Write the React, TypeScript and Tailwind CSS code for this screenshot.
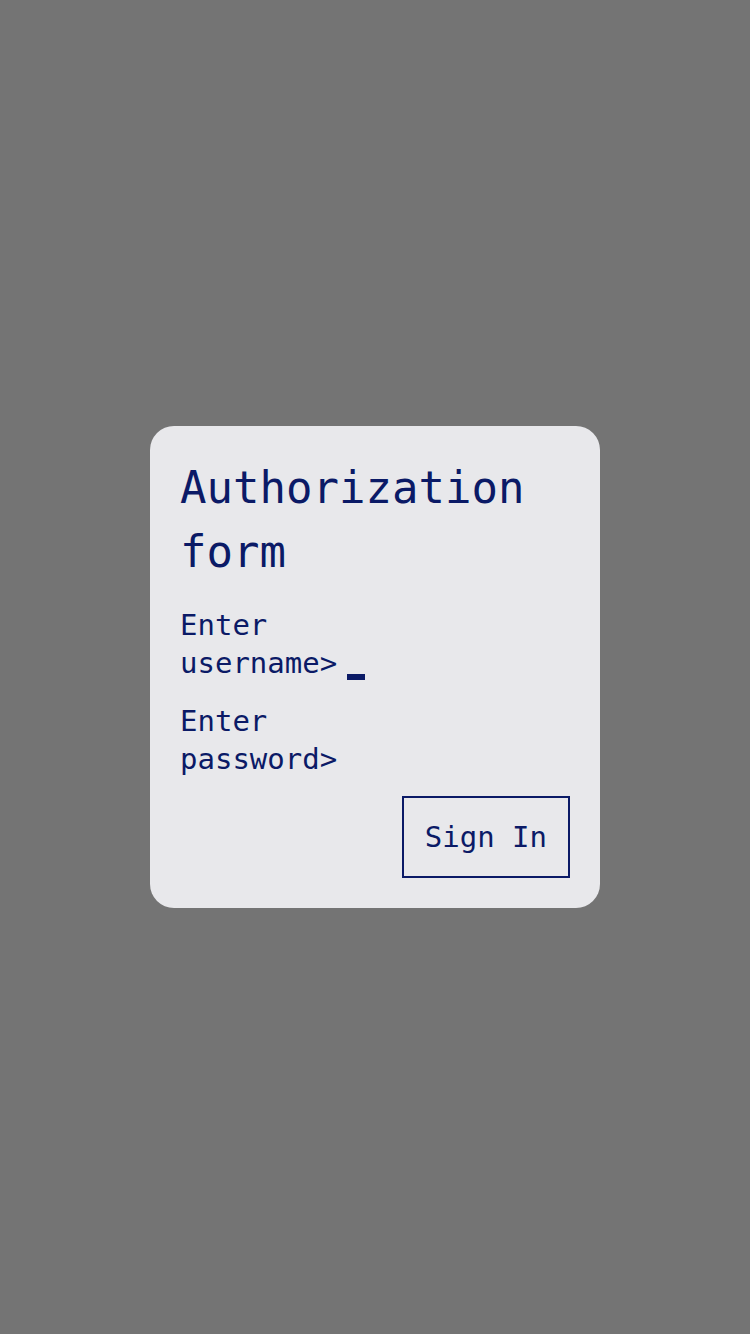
export default function App() {
  return (
    <div className="min-h-[1334px] w-full bg-[#747474] flex items-center justify-center font-['DejaVu_Sans_Mono',monospace] text-[#0b1a66]">
      <div className="w-[450px] bg-[#e8e8eb] rounded-[24px] p-[30px] flex flex-col">
        <h1 className="text-[44px] leading-[64px] font-normal">Authorization form</h1>

        <div className="mt-[22px] flex flex-col gap-[20px] text-[29px] leading-[38px]">
          <div className="flex items-end">
            <label className="w-min">Enter username&gt;</label>
            <span className="ml-[10px] mb-[2px] w-[18px] h-[6px] bg-[#0b1a66]" />
          </div>
          <div className="flex items-end">
            <label className="w-min">Enter password&gt;</label>
          </div>
        </div>

        <div className="mt-[18px] flex justify-end">
          <button className="border-2 border-[#0b1a66] px-[21px] py-[20px] text-[29px] leading-[38px] text-[#0b1a66]">
            Sign In
          </button>
        </div>
      </div>
    </div>
  )
}
